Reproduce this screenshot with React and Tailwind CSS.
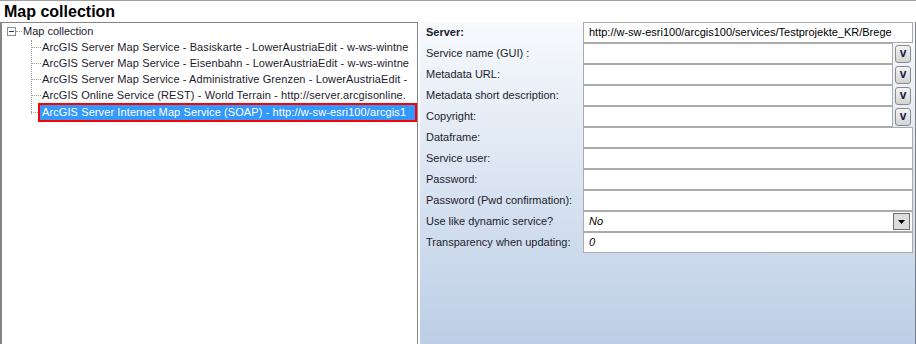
import React from 'react';

const treeItems = [
    'ArcGIS Server Map Service - Basiskarte - LowerAustriaEdit - w-ws-wintne',
    'ArcGIS Server Map Service - Eisenbahn - LowerAustriaEdit - w-ws-wintne',
    'ArcGIS Server Map Service - Administrative Grenzen - LowerAustriaEdit -',
    'ArcGIS Online Service (REST) - World Terrain - http://server.arcgisonline.',
];

const fields = [
    { label: 'Server:', bold: true, value: 'http://w-sw-esri100/arcgis100/services/Testprojekte_KR/Brege' },
    { label: 'Service name (GUI) :', button: true },
    { label: 'Metadata URL:', button: true },
    { label: 'Metadata short description:', button: true },
    { label: 'Copyright:', button: true },
    { label: 'Dataframe:' },
    { label: 'Service user:' },
    { label: 'Password:' },
    { label: 'Password (Pwd confirmation):' },
    { label: 'Use like dynamic service?', combo: true, value: 'No' },
    { label: 'Transparency when updating:', value: '0', italic: true },
];

function FieldRow({ field }) {
    return (
        <div className="flex h-[21px] items-center">
            <div className={`w-[163px] pl-[6px] text-[11px] text-[#1c1c2c] whitespace-nowrap ${field.bold ? 'font-bold' : ''}`}>
                {field.label}
            </div>
            {field.button ? (
                <div className="flex flex-1 h-full items-center pr-[2px]">
                    <div className="flex-1 h-full bg-white border border-[#ababab]" />
                    <div className="ml-[2px] w-[16px] h-[18px] rounded-[3px] border border-[#8a8a8a] bg-linear-to-b from-[#f4f4f4] to-[#d4d4d4] flex items-center justify-center text-[12px] font-bold text-[#1a1a4a] leading-none pb-[1px]">
                        v
                    </div>
                </div>
            ) : (
                <div className="flex-1 h-full bg-white border border-[#ababab] flex items-center pl-[5px] pr-[2px] text-[11px] text-black whitespace-nowrap overflow-hidden">
                    <span className={`flex-1 ${field.combo || field.italic ? 'italic' : ''}`}>{field.value}</span>
                    {field.combo && (
                        <div className="w-[17px] h-[17px] border border-[#6b6b6b] bg-[#dcdcdc] flex items-center justify-center">
                            <svg width="7" height="4" viewBox="0 0 7 4">
                                <path d="M0 0h7L3.5 4z" fill="#000" />
                            </svg>
                        </div>
                    )}
                </div>
            )}
        </div>
    );
}

export default function App() {
    return (
        <div
            className="w-[916px] h-[344px] bg-white border-t border-[#a0a0a0] overflow-hidden flex flex-col"
            style={{ fontFamily: '"Liberation Sans", Arial, sans-serif' }}
        >
            {/* Title */}
            <div className="h-[21px] pl-[4px] text-[16px] font-bold text-black leading-[21px]">
                Map collection
            </div>

            <div className="flex flex-1 min-h-0">
                {/* Left Section: Tree */}
                <div className="w-[418px] h-full border-t border-r border-l-2 border-[#858585] bg-white relative overflow-hidden pt-[1px]">
                    <div className="flex items-center h-[15px] pl-[5px]">
                        <div className="w-[9px] h-[9px] border border-[#8c8c8c] bg-white flex items-center justify-center">
                            <div className="w-[5px] h-[1px] bg-[#1a3a8a]" />
                        </div>
                        <div className="w-[6px] border-t border-dotted border-[#9a9a9a]" />
                        <span className="pl-[1px] text-[11px] text-[#1c1c2c]">Map collection</span>
                    </div>
                    <span className="absolute left-[29px] top-[17px] h-[74px] border-l border-dotted border-[#9a9a9a]" />
                    {treeItems.map((item) => (
                        <div key={item} className="flex items-center h-[16px] pl-[29px]">
                            <div className="w-[10px] border-t border-dotted border-[#9a9a9a]" />
                            <span className="pl-[1px] text-[11px] tracking-[0.1px] text-[#1c1c2c] whitespace-nowrap">{item}</span>
                        </div>
                    ))}
                    <div className="flex items-center h-[19px] pl-[29px]">
                        <div className="w-[7px] border-t border-dotted border-[#9a9a9a]" />
                        <div className="flex-1 h-full border-2 border-[#ff0000] bg-[#3399ff] flex items-center pl-[2px]">
                            <span className="text-[11px] tracking-[0.1px] text-white whitespace-nowrap">
                                ArcGIS Server Internet Map Service (SOAP) - http://w-sw-esri100/arcgis1
                            </span>
                        </div>
                    </div>
                </div>

                {/* Right Section: Properties */}
                <div className="ml-[2px] flex-1 h-full bg-linear-to-b from-[#f8fafd] to-[#bccee6] border-r border-[#7d7d7d] pr-[2px]">
                    {fields.map((field) => (
                        <FieldRow key={field.label} field={field} />
                    ))}
                </div>
            </div>
        </div>
    );
}
